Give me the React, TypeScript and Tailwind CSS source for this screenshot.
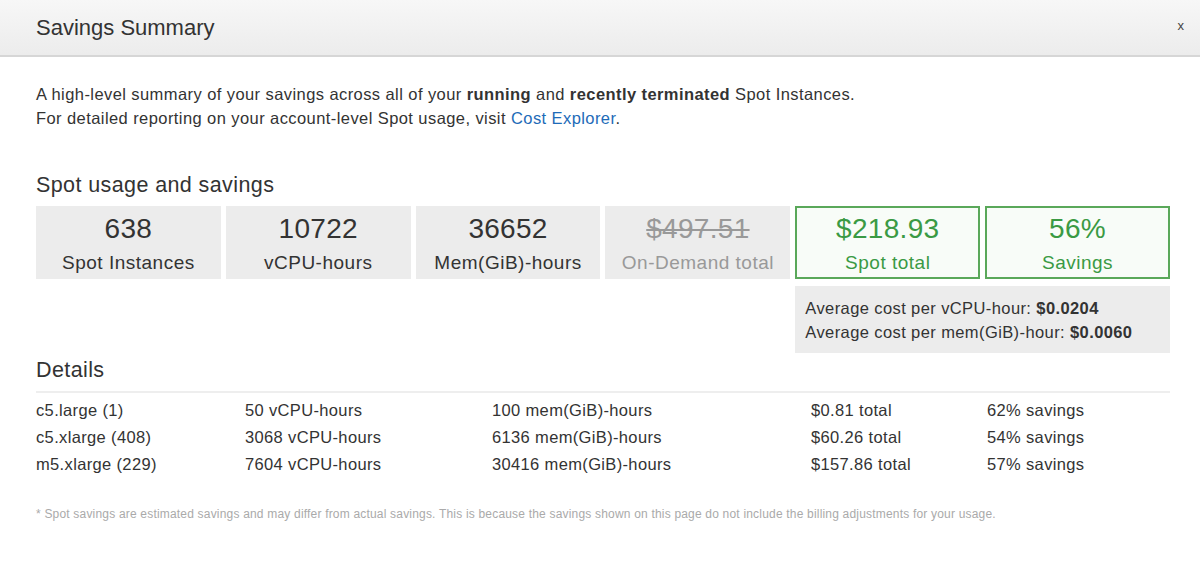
import React from 'react';

const stats = [
  { value: '638', label: 'Spot Instances' },
  { value: '10722', label: 'vCPU-hours' },
  { value: '36652', label: 'Mem(GiB)-hours' },
];

const rows = [
  ['c5.large (1)', '50 vCPU-hours', '100 mem(GiB)-hours', '$0.81 total', '62% savings'],
  ['c5.xlarge (408)', '3068 vCPU-hours', '6136 mem(GiB)-hours', '$60.26 total', '54% savings'],
  ['m5.xlarge (229)', '7604 vCPU-hours', '30416 mem(GiB)-hours', '$157.86 total', '57% savings'],
];

export default function App() {
  return (
    <div
      className="w-[1200px] h-[565px] bg-white text-[#333] overflow-hidden"
      style={{ fontFamily: '"Liberation Sans", Arial, sans-serif' }}
    >
      {/* Header */}
      <div className="h-[57px] flex items-center justify-between pl-[36px] pr-[16px] bg-gradient-to-b from-[#f7f7f7] to-[#ececec] border-b-2 border-[#d6d6d6]">
        <h1 className="text-[22px] text-[#333] leading-none">Savings Summary</h1>
        <button className="text-[13px] text-[#444] leading-none -mt-1">x</button>
      </div>

      <div className="px-[36px] pr-[30px]">
        <p className="mt-[25px] text-[16.5px] leading-[24px] tracking-[0.42px]">
          A high-level summary of your savings across all of your <b>running</b> and{' '}
          <b>recently terminated</b> Spot Instances.
          <br />
          For detailed reporting on your account-level Spot usage, visit{' '}
          <a className="text-[#1e6bb8]">Cost Explorer</a>.
        </p>

        <h2 className="mt-[42px] text-[21.5px] leading-[26px] tracking-[0.4px]">Spot usage and savings</h2>

        <div className="mt-[8px] grid grid-cols-6 gap-[5px]">
          {stats.map((s) => (
            <div key={s.label} className="h-[73px] bg-[#ececec] flex flex-col items-center pt-[7px]">
              <div className="text-[28px] leading-[32px] tracking-[0.3px]">{s.value}</div>
              <div className="text-[19px] leading-[24px] mt-[6px] tracking-[0.5px]">{s.label}</div>
            </div>
          ))}
          <div className="h-[73px] bg-[#ececec] flex flex-col items-center pt-[7px] text-[#999]">
            <div className="text-[28px] leading-[32px] tracking-[0.3px] line-through decoration-[2px]">$497.51</div>
            <div className="text-[19px] leading-[24px] mt-[6px] tracking-[0.5px]">On-Demand total</div>
          </div>
          <div className="h-[73px] bg-[#f8fcf8] border-2 border-[#5aa85a] flex flex-col items-center pt-[5px] text-[#3a9a44]">
            <div className="text-[28px] leading-[32px] tracking-[0.3px]">$218.93</div>
            <div className="text-[19px] leading-[24px] mt-[6px] tracking-[0.5px]">Spot total</div>
          </div>
          <div className="h-[73px] bg-[#f8fcf8] border-2 border-[#5aa85a] flex flex-col items-center pt-[5px] text-[#3a9a44]">
            <div className="text-[28px] leading-[32px] tracking-[0.3px]">56%</div>
            <div className="text-[19px] leading-[24px] mt-[6px] tracking-[0.5px]">Savings</div>
          </div>
          <div className="col-start-5 col-span-2 mt-[2px] h-[67px] bg-[#ececec] px-[10px] flex flex-col justify-center text-[16.5px] leading-[24px] tracking-[0.4px]">
            <div>
              Average cost per vCPU-hour: <b>$0.0204</b>
            </div>
            <div>
              Average cost per mem(GiB)-hour: <b>$0.0060</b>
            </div>
          </div>
        </div>

        <h2 className="mt-[4px] text-[21.5px] leading-[26px] tracking-[0.4px] pb-[8px] border-b-2 border-[#eee]">Details</h2>

        <div className="mt-[4px] text-[16.5px] leading-[27px] tracking-[0.35px]">
          {rows.map((r) => (
            <div key={r[0]} className="grid grid-cols-[209px_247px_319px_176px_1fr]">
              {r.map((c) => (
                <div key={c}>{c}</div>
              ))}
            </div>
          ))}
        </div>

        <p className="mt-[27px] text-[12px] text-[#aaa] tracking-[0.19px]">
          * Spot savings are estimated savings and may differ from actual savings. This is because the savings shown on
          this page do not include the billing adjustments for your usage.
        </p>
      </div>
    </div>
  );
}
